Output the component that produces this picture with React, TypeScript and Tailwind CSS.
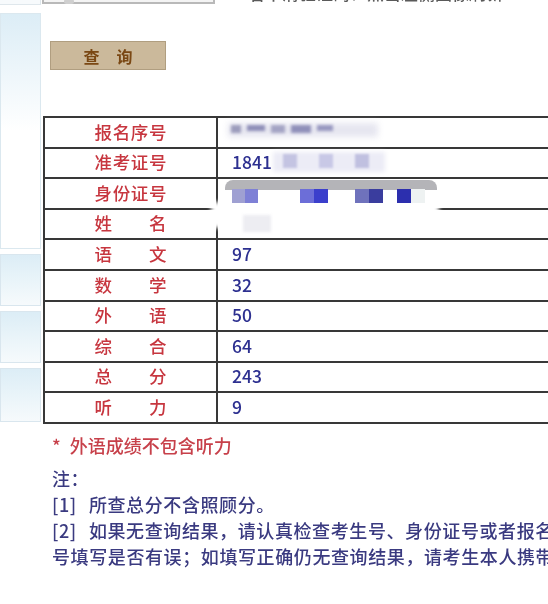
const labels = ['报名序号', '准考证号', '身份证号', '姓名', '语文', '数学', '外语', '综合', '总分', '听力']
const scores: Record<string, string> = {
  语文: '97',
  数学: '32',
  外语: '50',
  综合: '64',
  总分: '243',
  听力: '9',
}

function Label({ text }: { text: string }) {
  return (
    <span className="mx-auto flex w-[72px] justify-between">
      {text.split('').map((c, i) => (
        <span key={i}>{c}</span>
      ))}
    </span>
  )
}

function SidePanel({ h }: { h: string }) {
  return (
    <div
      className={`${h} mt-[5px] border border-[#d9e6ee] bg-gradient-to-b from-[#dcedf6] via-[#e9f4f9] to-[#f6fafc]`}
    />
  )
}

export default function App() {
  return (
    <div className="flex h-[604px] w-[548px] overflow-hidden bg-white blur-[0.35px] [font-family:'Noto_Sans_CJK_SC','Noto_Sans',sans-serif]">
      {/* 左侧菜单栏 */}
      <aside className="flex w-[41px] shrink-0 flex-col">
        <div className="h-[5px] border-b border-r border-[#dfe7ec] bg-[#f7fafc]" />
        <div className="mt-[8px] h-[236px] border border-[#dbe8ef] bg-gradient-to-b from-[#dcedf6] via-white to-white" />
        <SidePanel h="h-[52px]" />
        <SidePanel h="h-[52px]" />
        <SidePanel h="h-[54px]" />
      </aside>

      <main className="min-w-0 flex-1 overflow-hidden">
        {/* 验证码输入行 */}
        <div className="-mt-[14px] flex h-[18px] items-end">
          <div className="relative ml-[1px] h-[17px] w-[173px] border-2 border-[#b9b9b9] bg-[#f4f4f4]">
            <div className="absolute bottom-[-2px] left-[20px] h-[5px] w-[10px] rounded-full bg-[#cfcfcf]" />
          </div>
          <p className="ml-[33px] whitespace-nowrap text-[17px] font-medium leading-[22px] text-[#5a5a5a]">
            看不清验证码？点击左侧图像刷新
          </p>
        </div>

        <button className="ml-[9px] mt-[37px] flex h-[29px] w-[116px] items-center justify-center border border-[#b09e80] bg-[#cbb99b] text-[16px] font-bold tracking-[17px] text-[#7a4814]">
          <span className="pl-[17px]">查询</span>
        </button>

        <div className="relative ml-[2px] mt-[46px]">
          <table className="w-[540px] border-collapse text-[17.5px] font-medium">
            <tbody>
              {labels.map((l) => (
                <tr key={l} className="h-[30.6px]">
                  <td className="w-[173px] border-2 border-[#383838] p-0 pb-[2px] leading-none text-[#c7363f]">
                    <Label text={l} />
                  </td>
                  <td className="border-2 border-[#383838] p-0 pb-[2px] pl-[14px] leading-none text-[#2d3090]">
                    {l === '准考证号' ? '1841' : scores[l] ?? ''}
                  </td>
                </tr>
              ))}
            </tbody>
          </table>

          {/* 打码区域 */}
          <div className="absolute left-[185px] top-[7px] h-[14px] w-[150px] bg-[#e6e6f0] blur-[3px]" />
          <div className="absolute left-[188px] top-[9px] flex gap-[6px] blur-[1.5px]">
            <div className="h-[8px] w-[10px] bg-[#9c9cbc]" />
            <div className="h-[6px] w-[18px] bg-[#8e8eb8]" />
            <div className="h-[8px] w-[14px] bg-[#a4a4c4]" />
            <div className="h-[8px] w-[20px] bg-[#9090ba]" />
            <div className="h-[6px] w-[16px] bg-[#9898c0]" />
          </div>
          <div className="absolute left-[230px] top-[36px] h-[20px] w-[112px] bg-[#ececf6] blur-[2px]" />
          <div className="absolute left-[240px] top-[38px] flex gap-[22px] blur-[1px]">
            <div className="h-[14px] w-[14px] bg-[#c4c4e2]" />
            <div className="h-[14px] w-[14px] bg-[#c8c8e6]" />
            <div className="h-[14px] w-[14px] bg-[#c0c0e0]" />
          </div>
          <div className="absolute left-[168px] top-[86px] h-[26px] w-[228px] bg-white blur-[2px]" />
          <div className="absolute left-[182px] top-[64px] h-[10px] w-[212px] rounded-t-[8px] bg-[#b4b4b8] blur-[0.6px]" />
          <div className="absolute left-[189px] top-[73px] flex blur-[0.6px]">
            <div className="h-[14px] w-[13px] bg-[#9fa0d2]" />
            <div className="h-[14px] w-[13px] bg-[#7e80d6]" />
            <div className="ml-[42px] h-[14px] w-[14px] bg-[#6c6ed8]" />
            <div className="h-[14px] w-[14px] bg-[#3b3fcc]" />
            <div className="ml-[27px] h-[14px] w-[14px] bg-[#6f72bc]" />
            <div className="h-[14px] w-[14px] bg-[#3a3d9e]" />
            <div className="ml-[14px] h-[14px] w-[14px] bg-[#2c2fae]" />
            <div className="h-[14px] w-[14px] bg-[#eef2f2]" />
          </div>
          <div className="absolute left-[200px] top-[99px] h-[17px] w-[28px] bg-[#ededf2] blur-[1.5px]" />
        </div>

        <div className="ml-[11px] mt-[8px] whitespace-nowrap text-[18px] font-medium leading-[26px]">
          <p className="text-[#c7404a]">
            <span className="mr-[9px]">*</span>外语成绩不包含听力
          </p>
          <div className="mt-[7px] tracking-[0.6px] text-[#3a3a80]">
            <p>注：</p>
            <p>
              [1]<span className="ml-[12px]">所查总分不含照顾分。</span>
            </p>
            <p>
              [2]<span className="ml-[12px]">如果无查询结果，请认真检查考生号、身份证号或者报名</span>
            </p>
            <p>号填写是否有误；如填写正确仍无查询结果，请考生本人携带准考证</p>
          </div>
        </div>
      </main>
    </div>
  )
}
